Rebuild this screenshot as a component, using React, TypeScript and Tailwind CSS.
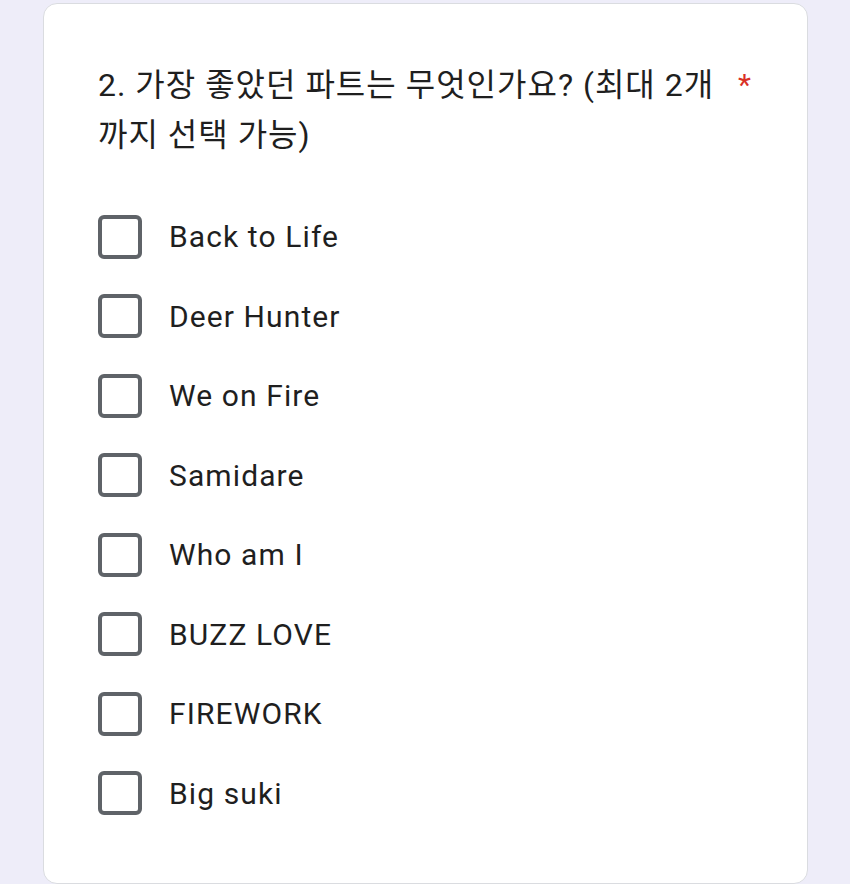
import React from "react";

const options = [
  "Back to Life",
  "Deer Hunter",
  "We on Fire",
  "Samidare",
  "Who am I",
  "BUZZ LOVE",
  "FIREWORK",
  "Big suki",
];

export default function App() {
  return (
    <div
      className="w-[850px] h-[884px] overflow-hidden bg-[#eeedf9] pt-[3px] pl-[43px]"
      style={{ fontFamily: 'Roboto, "Noto Sans CJK KR", "Noto Sans", sans-serif' }}
    >
      <div className="w-[765px] h-[881px] bg-white border border-[#dadce0] rounded-[14px] pt-[56px] pl-[54px] pr-[40px]">
        <div className="flex items-start text-[#1f1f1f]">
          <div className="w-[625px] text-[32px] leading-[50px] tracking-[1px]">
            2. 가장 좋았던 파트는 무엇인가요? (최대 2개 까지 선택 가능)
          </div>
          <span className="ml-[15px] text-[#d93025] text-[30px] leading-[50px]">*</span>
        </div>
        <div className="mt-[37px] flex flex-col">
          {options.map((o) => (
            <div key={o} className="h-[79.5px] flex items-center">
              <div className="w-[44px] h-[44px] border-[4px] border-[#5f6368] rounded-[6px] shrink-0" />
              <div className="ml-[27px] text-[30px] tracking-[1.1px] text-[#1f1f1f]">{o}</div>
            </div>
          ))}
        </div>
      </div>
    </div>
  );
}
